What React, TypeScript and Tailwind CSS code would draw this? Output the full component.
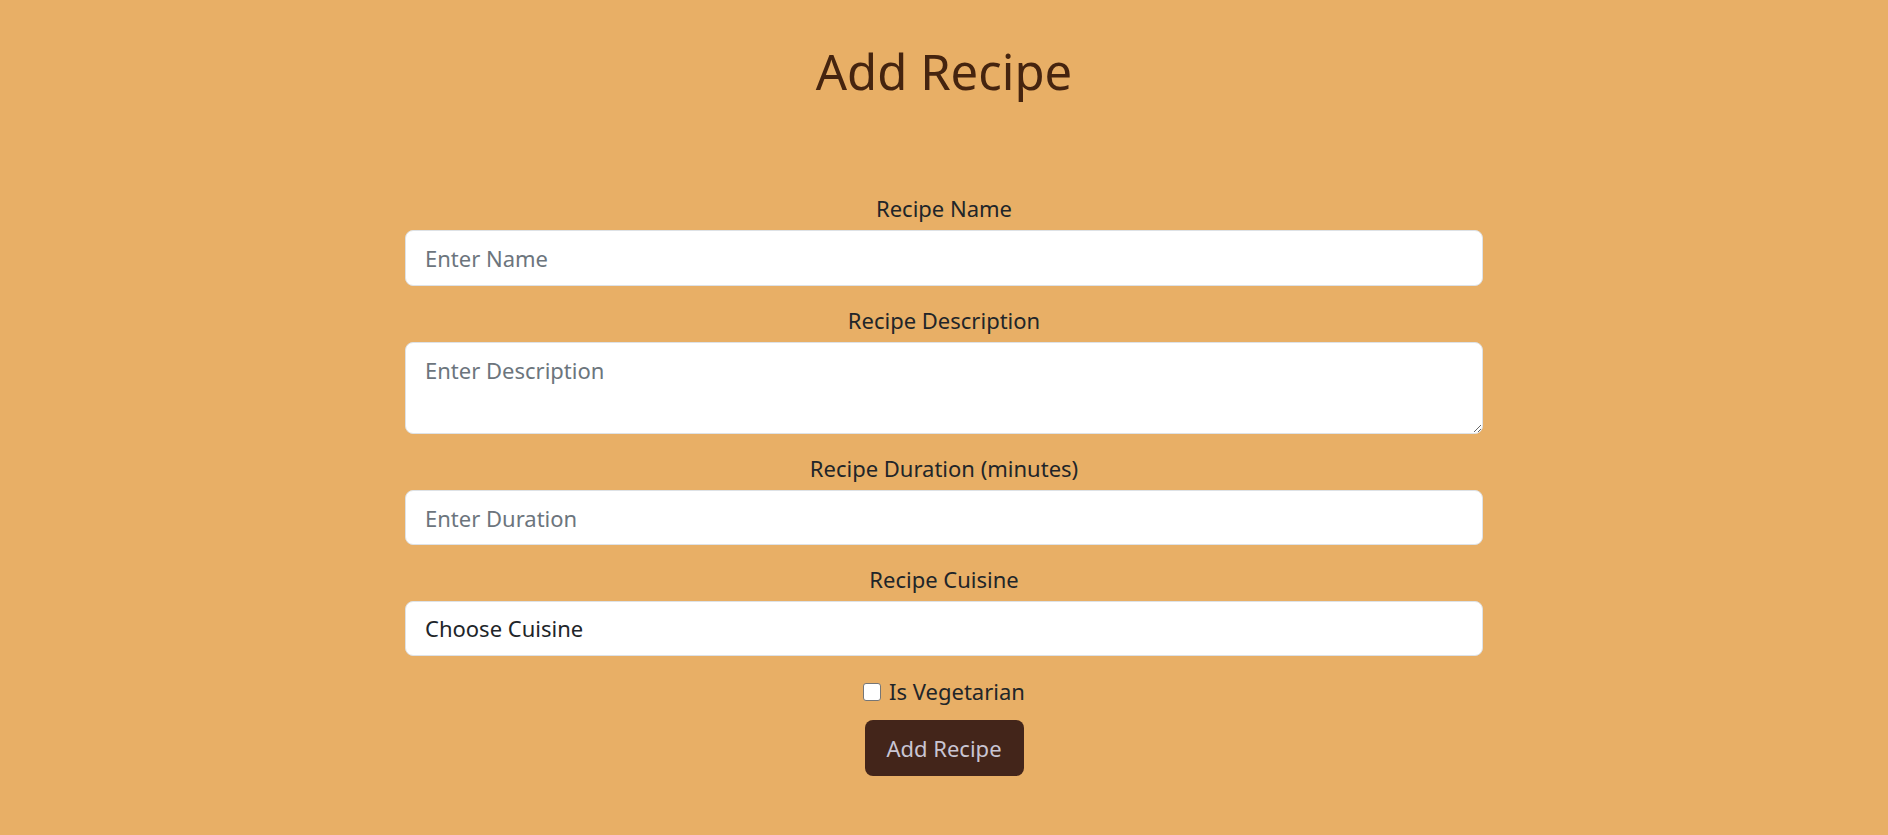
import React from "react";

const font = { fontFamily: '"Noto Sans", "Open Sans", sans-serif' };

export default function App() {
  return (
    <div
      className="min-h-screen w-full bg-[#e8af66] text-[#212529]"
      style={font}
    >
      <h1 className="pt-[42px] text-center text-[49px] leading-[59px] font-normal text-[#45240f]">
        Add Recipe
      </h1>
      <form className="mx-auto mt-[91px] flex w-[1078px] flex-col items-stretch">
        <label className="mb-[5px] text-center text-[22px] leading-[33px]">Recipe Name</label>
        <input
          type="text"
          placeholder="Enter Name"
          className="mb-[18px] h-[56px] rounded-[8px] border border-[#dee2e6] bg-white px-[19px] text-[22px] leading-[33px] text-[#212529] placeholder:text-[#6c757d] outline-none"
        />
        <label className="mb-[5px] text-center text-[22px] leading-[33px]">Recipe Description</label>
        <textarea
          placeholder="Enter Description"
          className="mb-[18px] h-[92px] rounded-[8px] border border-[#dee2e6] bg-white px-[19px] pt-[11px] text-[22px] leading-[33px] text-[#212529] placeholder:text-[#6c757d] outline-none"
        />
        <label className="mb-[5px] text-center text-[22px] leading-[33px]">Recipe Duration (minutes)</label>
        <input
          type="text"
          placeholder="Enter Duration"
          className="mb-[18px] h-[55px] rounded-[8px] border border-[#dee2e6] bg-white px-[19px] text-[22px] leading-[33px] text-[#212529] placeholder:text-[#6c757d] outline-none"
        />
        <label className="mb-[5px] text-center text-[22px] leading-[33px]">Recipe Cuisine</label>
        <select
          defaultValue=""
          className="h-[55px] appearance-none rounded-[8px] border border-[#dee2e6] bg-white px-[19px] text-[22px] leading-[33px] text-[#212529] outline-none"
        >
          <option value="">Choose Cuisine</option>
        </select>
        <div className="mt-[19px] flex items-center justify-center gap-[8px] text-[22px] leading-[33px]">
          <span className="inline-block h-[18px] w-[18px] rounded-[3px] border border-[#767676] bg-white" />
          <span>Is Vegetarian</span>
        </div>
        <div className="mt-[12px] flex justify-center">
          <button
            type="button"
            className="h-[56px] w-[159px] rounded-[8px] bg-[#43251a] text-[22px] leading-[33px] text-[#c9c5d3]"
          >
            Add Recipe
          </button>
        </div>
      </form>
    </div>
  );
}
